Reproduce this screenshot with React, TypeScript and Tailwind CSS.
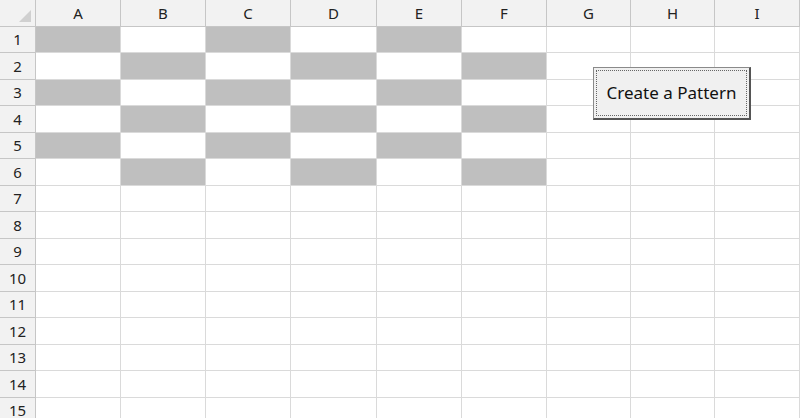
import React from 'react';

const cols = ['A', 'B', 'C', 'D', 'E', 'F', 'G', 'H', 'I'];
const colWidths = ['w-[85px]', 'w-[85px]', 'w-[85px]', 'w-[86px]', 'w-[85px]', 'w-[85px]', 'w-[84px]', 'w-[84px]', 'w-[85px]'];
const rows = Array.from({ length: 15 }, (_, i) => i + 1);

// odd rows shade A, C, E; even rows shade B, D, F (rows 1-6 only)
function isShaded(row: number, col: number) {
    if (row > 6 || col > 5) return false;
    return row % 2 === 1 ? col % 2 === 0 : col % 2 === 1;
}

export default function App() {
    return (
        <div className="relative w-[800px] h-[418px] overflow-hidden bg-white" style={{ fontFamily: '"Noto Sans", "Open Sans", sans-serif' }}>
            {/* column headers */}
            <div className="flex h-[27px]">
                <div className="relative w-[36px] shrink-0 bg-[#f2f2f2] border-r border-b border-[#c6c6c6]">
                    <div className="absolute right-[4px] bottom-[4px] w-0 h-0 border-l-[12px] border-l-transparent border-b-[12px] border-b-[#d0d0d0]" />
                </div>
                {cols.map((c, i) => (
                    <div
                        key={c}
                        className={`${colWidths[i]} shrink-0 flex items-center justify-center bg-[#f2f2f2] border-r border-b border-[#c6c6c6] text-[15px] text-[#222]`}
                    >
                        {c}
                    </div>
                ))}
            </div>

            {/* body */}
            {rows.map(r => (
                <div key={r} className={`flex ${r % 2 === 1 ? 'h-[26px]' : 'h-[27px]'}`}>
                    <div className="w-[36px] shrink-0 flex items-center justify-center bg-[#f2f2f2] border-r border-b border-[#c6c6c6] text-[15px] text-[#222]">
                        {r}
                    </div>
                    {cols.map((c, i) => (
                        <div
                            key={c}
                            className={`${colWidths[i]} shrink-0 border-r border-b border-[#dadada] ${isShaded(r, i) ? 'bg-[#bfbfbf]' : 'bg-white'}`}
                        />
                    ))}
                </div>
            ))}

            {/* form button */}
            <div className="absolute left-[593px] top-[67px] w-[158px] h-[53px] bg-[#f0f0f0] border border-[#8a8a8a] border-r-[2px] border-b-[2px] border-r-[#555] border-b-[#555] p-[2px]">
                <div className="w-full h-full border border-dotted border-[#666] flex items-center justify-center text-[17px] text-[#111]">
                    Create a Pattern
                </div>
            </div>
        </div>
    );
}
